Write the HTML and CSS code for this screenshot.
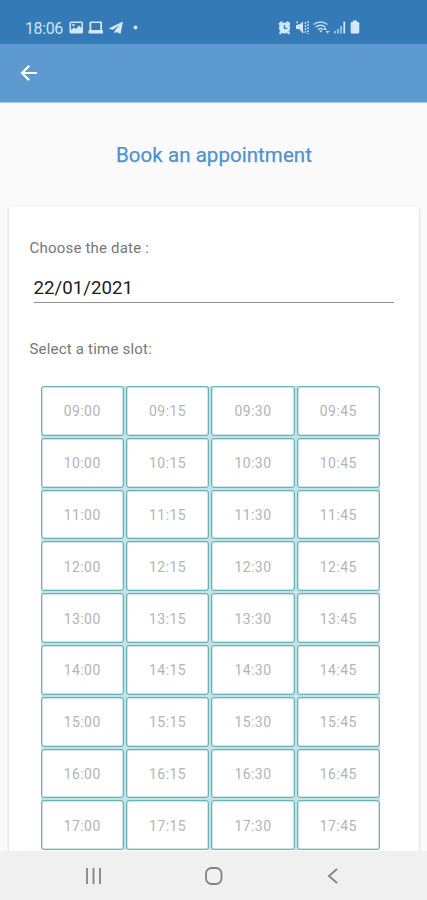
FILE: index.html
```html
<!DOCTYPE html>
<html lang="en">
<head>
<meta charset="utf-8">
<title>Book an appointment</title>
<link rel="stylesheet" href="styles.css">
</head>
<body>
<div class="screen">
  <div class="status">
    <span class="clock">18:06</span>
    <svg class="status-left" width="72" height="16" viewBox="68 20 72 16">
      <path fill-rule="evenodd" d="M71 21.500h10.500q1.500 0 1.500 1.500v9q0 1.500-1.500 1.500h-10.500q-1.500 0-1.500-1.500v-9q0-1.500 1.500-1.500zM71 23v7l3-2.500 2 1.500 3-3.500 2.500 2.500v-5z"/>
      <circle cx="73.500" cy="25" r="1.200"/>
      <path fill-rule="evenodd" d="M91 21.500h10q1 0 1 1v8h1v3h-14.500v-3h1v-8q0-1 1.500-1zM91.300 23v7h9v-7z"/>
      <path d="M123 21.500l-14.500 7 4.500 1.300 6.500-4.800-5 6v2.500l2-1.500 4 2z"/>
      <circle cx="135.500" cy="27.500" r="1.900"/>
    </svg>
    <svg class="status-right" width="84" height="16" viewBox="277 20 84 16">
      <circle cx="284.500" cy="28" r="5.500"/>
      <path d="M278.500 23.500l3-2.500 1.500 1.500-3.500 3zM290.500 23.500l-3-2.500-1.500 1.500 3.500 3zM280 31l2 2-1.500 1.500-1.500-1zM289 31l-2 2 1.500 1.500 1.500-1z"/>
      <path class="cut" d="M284.500 25v3.300h2.700"/>
      <path d="M296 25h3l4-3.500v12l-4-4.500h-3z"/>
      <path class="stroke" d="M296.500 21.500l7 11M305.500 22v11.500M308 21v13" stroke-dasharray="2 1"/>
      <path class="stroke" d="M313.500 24.500q7-5 14 0M315.500 27q5-3.500 10 0M318 29.300q2.700-1.600 5 0"/>
      <path d="M319 30.500h3.500l-1.500 2zM325 27.500l2 2.500h-4zM326 31h3.500l-2 2.500z"/>
      <path class="dim" d="M334 31h2v2.500h-2zM337 29h2v4.500h-2zM340 26h2v7.500h-2z"/>
      <path d="M343.400 21.500h1.700v12h-1.700z"/>
      <path d="M353 20.500h4v1.500h1q1.300 0 1.300 1.300v9q0 1.300-1.300 1.300h-6q-1.300 0-1.300-1.300v-9q0-1.300 1.300-1.300h1z"/>
    </svg>
  </div>
  <header class="toolbar">
    <svg width="18" height="18" viewBox="0 0 18 18"><path d="M17 9H2M9.200 1.800L2 9l7.200 7.200"/></svg>
  </header>
  <main class="content">
    <h1>Book an appointment</h1>
    <section class="card">
      <label class="label">Choose the date :</label>
      <div class="date">22/01/2021</div>
      <div class="label slot-label">Select a time slot:</div>
      <div class="slots">
        <div>09:00</div><div>09:15</div><div>09:30</div><div>09:45</div>
        <div>10:00</div><div>10:15</div><div>10:30</div><div>10:45</div>
        <div>11:00</div><div>11:15</div><div>11:30</div><div>11:45</div>
        <div>12:00</div><div>12:15</div><div>12:30</div><div>12:45</div>
        <div>13:00</div><div>13:15</div><div>13:30</div><div>13:45</div>
        <div>14:00</div><div>14:15</div><div>14:30</div><div>14:45</div>
        <div>15:00</div><div>15:15</div><div>15:30</div><div>15:45</div>
        <div>16:00</div><div>16:15</div><div>16:30</div><div>16:45</div>
        <div>17:00</div><div>17:15</div><div>17:30</div><div>17:45</div>
      </div>
    </section>
  </main>
  <nav class="navbar">
    <svg width="18" height="18" viewBox="0 0 18 18"><path d="M2 1v16M8.500 1v16M15 1v16"/></svg>
    <svg width="18" height="18" viewBox="0 0 18 18"><rect x="1" y="1" width="15.500" height="16" rx="5.500"/></svg>
    <svg width="18" height="18" viewBox="0 0 18 18"><path d="M13 2L5 9l8 7"/></svg>
  </nav>
</div>
</body>
</html>
```
FILE: styles.css
```css
* { box-sizing: border-box; }
body { margin: 0; font-family: Roboto, sans-serif; }
.screen {
  height: 900px;
  display: flex;
  flex-direction: column;
  overflow: hidden;
  background: #fafafa;
}
.status {
  flex: none;
  height: 44px;
  padding: 12px 66px 0 25px;
  display: flex;
  align-items: center;
  background: #337ab7;
  color: #cfe5f7;
}
.clock { width: 43px; font-size: 16px; letter-spacing: -0.4px; }
.status svg { fill: #d3e8f8; }
.status-right { margin-left: auto; }
.status .stroke { fill: none; stroke: #c3def3; stroke-width: 1.4; }
.status .cut { fill: none; stroke: #337ab7; stroke-width: 1.3; }
.status .dim { fill: #8fbbe0; }
.toolbar {
  flex: none;
  height: 59px;
  padding-left: 20px;
  display: flex;
  align-items: center;
  background: #5c9ad0;
  border-bottom: 1px solid #a5c9e6;
}
.toolbar svg { fill: none; stroke: #fff; stroke-width: 2.2; }
.content {
  flex: 1;
  min-height: 0;
  padding: 0 8px 0 9px;
  overflow: hidden;
}
h1 {
  margin: 0;
  padding-top: 40px;
  height: 103px;
  font-size: 20.5px;
  line-height: 24px;
  font-weight: 400;
  letter-spacing: 0.05px;
  text-align: center;
  color: #4e93ce;
  -webkit-text-stroke: 0.25px #4e93ce;
}
.card {
  height: 700px;
  padding: 32px 25px 0 20.5px;
  background: #fff;
  border-radius: 2px;
  box-shadow: 0 1px 3px rgba(0, 0, 0, 0.2);
}
.label {
  display: block;
  font-size: 15px;
  line-height: 20px;
  letter-spacing: 0.2px;
  color: #777;
}
.date {
  height: 36px;
  margin: 9px 0 0 4px;
  padding-top: 9px;
  border-bottom: 1.5px solid #929292;
  font-size: 18.7px;
  line-height: 24px;
  color: #1c1c1c;
}
.slot-label { margin-top: 36px; }
.slots {
  width: 339.5px;
  margin: 27px 0 0 11px;
  display: grid;
  grid-template-columns: repeat(4, 1fr);
  grid-auto-rows: 49.8px;
  gap: 2px;
  background: #c4e3e4;
  border-radius: 3px;
}
.slots div {
  display: flex;
  align-items: center;
  justify-content: center;
  padding-top: 1px;
  background: #fff;
  border: 1px solid #68b2b9;
  border-radius: 3px;
  box-shadow: inset 0 0 0 0.5px #9bcdd1;
  font-size: 14px;
  letter-spacing: 0.45px;
  color: #b4b4b4;
}
.navbar {
  flex: none;
  height: 49px;
  padding: 0 85px;
  display: flex;
  align-items: center;
  justify-content: space-between;
  background: #f0f0f0;
}
.navbar svg { fill: none; stroke: #828282; stroke-width: 1.8; }
```
